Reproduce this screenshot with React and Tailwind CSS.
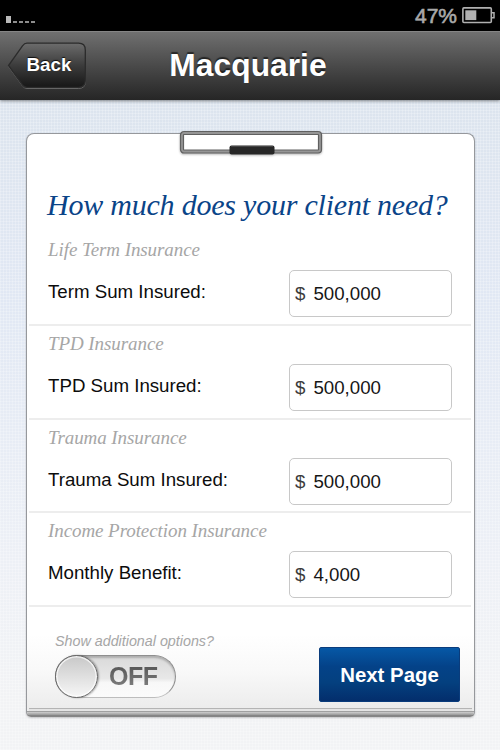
import { useState } from "react";

const covers = [
  { id: "life", title: "Life Term Insurance", label: "Term Sum Insured:", value: "500,000" },
  { id: "tpd", title: "TPD Insurance", label: "TPD Sum Insured:", value: "500,000" },
  { id: "trauma", title: "Trauma Insurance", label: "Trauma Sum Insured:", value: "500,000" },
  { id: "income", title: "Income Protection Insurance", label: "Monthly Benefit:", value: "4,000" },
];

const StatusBar = () => (
  <div className="flex h-[31px] shrink-0 items-start justify-between bg-black pl-[6px] pr-[5px]">
    <div className="flex items-end gap-[2px] pt-[16px]">
      <span className="h-[7px] w-[5px] bg-[#b9b9b9]" />
      <span className="h-[2px] w-1 bg-[#8d8d8d]" />
      <span className="h-[2px] w-1 bg-[#8d8d8d]" />
      <span className="h-[2px] w-1 bg-[#8d8d8d]" />
      <span className="h-[2px] w-1 bg-[#8d8d8d]" />
    </div>
    <div className="flex items-start gap-[5px]">
      <span className="pt-1 text-[21px] leading-6 text-[#a9a9a9] [-webkit-text-stroke:0.6px_#a9a9a9]">
        47%
      </span>
      <svg width="33" height="17" viewBox="0 0 33 17" fill="none" className="mt-[7px]">
        <rect x="0.9" y="0.9" width="28.4" height="14.6" rx="1" stroke="#b0b0b0" strokeWidth="1.6" />
        <rect x="3.3" y="3.3" width="11" height="9.8" fill="#b0b0b0" />
        <path d="M30 5.8h2v5h-2" stroke="#b0b0b0" strokeWidth="1.5" />
      </svg>
    </div>
  </div>
);

const NavBar = () => (
  <div className="relative z-10 grid h-[69px] shrink-0 grid-cols-[90px_1fr_94px] border-t border-[#858585] bg-linear-to-b from-[#707070] to-[#262626] shadow-[0_1px_3px_rgba(0,0,0,0.45)]">
    <button className="relative mt-[10px] ml-[7px] h-[48px] w-[80px]">
      <svg width="80" height="48" viewBox="0 0 80 48" className="absolute inset-0">
        <defs>
          <linearGradient id="back" x1="0" y1="0" x2="0" y2="1">
            <stop offset="0" stopColor="#6c6c6c" />
            <stop offset="0.5" stopColor="#3c3c3c" />
            <stop offset="1" stopColor="#171717" />
          </linearGradient>
        </defs>
        <path
          d="M20 2.2H71.5Q78.5 2.2 78.5 9V39.5Q78.5 46.5 71.5 46.5H20Q17.5 46.5 15.5 44L1.5 24.5L15.5 4.8Q17.5 2.2 20 2.2Z"
          stroke="#666" strokeWidth="1" fill="none"
        />
        <path
          d="M20 1.2H71.5Q78.3 1.2 78.3 8V38.5Q78.3 45.3 71.5 45.3H20Q17.5 45.3 15.5 43L1.5 23.5L15.5 3.8Q17.5 1.2 20 1.2Z"
          stroke="#2b2b2b" strokeWidth="1.3" fill="url(#back)"
        />
      </svg>
      <span className="relative -top-[1px] left-[2px] text-[18.8px] leading-6 font-bold text-white [text-shadow:0_-1px_1px_rgba(0,0,0,0.8)]">
        Back
      </span>
    </button>
    <h1 className="pt-[13px] text-center text-[31.8px] leading-10 font-bold text-white [text-shadow:0_-2px_1px_rgba(0,0,0,0.55)]">
      Macquarie
    </h1>
  </div>
);

// Metal clip that hangs over the top edge of the board
const Clip = () => (
  <svg width="146" height="30" viewBox="0 0 146 30" className="absolute -top-[5px] left-[151px] drop-shadow-[0_1px_1px_rgba(0,0,0,0.3)]">
    <rect x="4" y="4" width="138" height="18.5" rx="2" fill="#fff" stroke="#606060" strokeWidth="4.2" />
    <rect x="4" y="4" width="138" height="18.5" rx="2" fill="none" stroke="#959595" strokeWidth="1.8" />
    <rect x="51.5" y="16.5" width="45" height="9" rx="2" fill="#272727" />
    <path d="M53 17.5H95" stroke="#444" strokeWidth="1" />
  </svg>
);

const CoverRow = ({ cover, value, onChange }) => (
  <div className="h-[93.8px] border-b-2 border-[#ededed] pr-[19px] pl-[19px]">
    <h3 className="pt-[6px] font-['Liberation_Serif',serif] text-[19px] leading-6 tracking-[-0.08px] text-[#a6a6a6] italic">
      {cover.title}
    </h3>
    <div className="mt-[8px] flex items-start justify-between">
      <label htmlFor={cover.id} className="pt-[10px] text-[18.7px] leading-6 text-[#0c0c0c]">
        {cover.label}
      </label>
      <div className="flex h-[47px] w-[163px] items-center gap-[8px] rounded-[5px] border-[1.5px] border-[#c8c8c8] bg-white pt-px pl-[5px] text-[18.7px]">
        <span className="text-[#3b3b3b]">$</span>
        <input
          id={cover.id}
          value={value}
          onChange={(e) => onChange(e.target.value)}
          className="w-[120px] bg-transparent text-[#161616] outline-none"
        />
      </div>
    </div>
  </div>
);

const Toggle = ({ on, onToggle }) => (
  <button
    onClick={onToggle}
    className="relative flex h-[43px] w-[121px] items-center rounded-full border border-[#8f8f8f] border-b-[#bdbdbd] bg-[linear-gradient(#d9d9d9,#e8e8e8_55%,#f8f8f8_65%,#fbfbfb)] shadow-[inset_0_2px_2px_rgba(0,0,0,0.2)]"
  >
    <span className="-ml-px size-[43px] rounded-full border-[1.5px] border-[#686868] bg-linear-to-b from-[#c8c8c8] to-[#f7f7f7] shadow-[inset_0_0_0_1.5px_rgba(255,255,255,0.7),1px_0_2px_rgba(0,0,0,0.35)]" />
    <span className="-mt-[2px] ml-[11px] bg-linear-to-b from-[#505050] to-[#848484] bg-clip-text text-[25px] leading-7 font-bold tracking-[-0.5px] text-transparent">
      {on ? "ON" : "OFF"}
    </span>
  </button>
);

const App = () => {
  const [sums, setSums] = useState(Object.fromEntries(covers.map((c) => [c.id, c.value])));
  const [more, setMore] = useState(false);

  return (
    <div className="flex h-[750px] w-[500px] flex-col overflow-hidden bg-[repeating-linear-gradient(0deg,rgba(255,255,255,0.22)_0_1px,transparent_1px_3px),repeating-linear-gradient(90deg,rgba(255,255,255,0.22)_0_1px,transparent_1px_3px),linear-gradient(#dce4ee_100px,#e1e8f4_300px,#edf0f6_560px,#f2f3f5_700px)] font-['Liberation_Sans',Arial,sans-serif]">
      <StatusBar />
      <NavBar />

      <div className="relative mt-[33px] ml-[26px] flex h-[584px] w-[449px] flex-col rounded-t-[8px] rounded-b-[5px] border border-b-2 border-[#96989c] border-b-[#858585] bg-[linear-gradient(#fff_500px,#f9f9f9_535px,#ececec_575px)] shadow-[0_1px_2px_rgba(0,0,0,0.2)]">
        <Clip />
        <h2 className="h-[98px] pt-[53px] pl-[20px] font-['Liberation_Serif',serif] text-[30px] leading-9 tracking-[-0.22px] whitespace-nowrap text-[#0a4488] italic">
          How much does your client need?
        </h2>

        <div className="mr-[3px] ml-[2px]">
          {covers.map((cover) => (
            <CoverRow
              key={cover.id}
              cover={cover}
              value={sums[cover.id]}
              onChange={(v) => setSums({ ...sums, [cover.id]: v })}
            />
          ))}
        </div>

        <div className="flex flex-1 justify-between pr-[14px] pl-[28px]">
          <div className="pt-[24px]">
            <p className="mb-[4px] text-[14.3px] leading-5 text-[#a6a6a6] italic">
              Show additional options?
            </p>
            <Toggle on={more} onToggle={() => setMore(!more)} />
          </div>
          <button className="mt-[40px] h-[55px] w-[141px] rounded-[2px] border border-[#0a3c7c] bg-[linear-gradient(#0658a6,#044288_35%,#04407f_65%,#032e6c)] pt-px text-[20.4px] font-bold text-white">
            Next Page
          </button>
        </div>

        {/* stacked page edges */}
        <div className="mx-[2px] h-[3px] shrink-0 border-t border-[#b4b4b4] bg-[#e4e4e4]" />
        <div className="h-[4px] shrink-0 rounded-b-[3px] border-t border-[#a0a0a0] bg-linear-to-b from-[#cfcfcf] to-[#989898]" />
      </div>
    </div>
  );
};

export default App;
